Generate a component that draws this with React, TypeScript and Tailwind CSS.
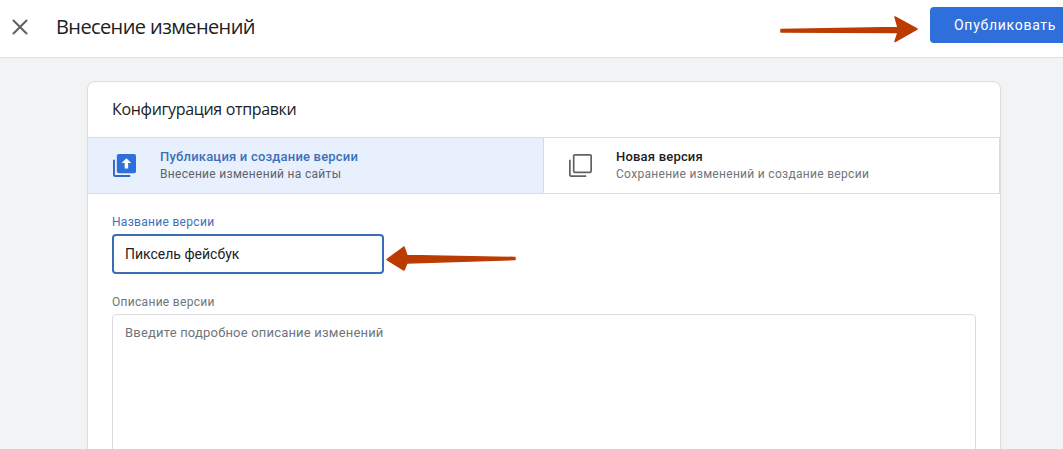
import { X } from "lucide-react";

function PublishIcon() {
  return (
    <svg width="23" height="23" viewBox="0 0 24 24" className="shrink-0 ml-[1px]">
      <path d="M2 6H0v16c0 1.1.9 2 2 2h16v-2H2V6z" fill="#3367c4" />
      <rect x="4" y="0" width="20" height="20" rx="2" fill="#2f6fdb" />
      <path d="M14 4.5l-5 5h3.2V15h3.6V9.500H19l-5-5z" fill="#ffffff" />
    </svg>
  );
}

function VersionIcon() {
  return (
    <svg width="23" height="23" viewBox="0 0 24 24" className="shrink-0 ml-[1px]" fill="#5f6368">
      <path d="M1.800 6H0v16c0 1.100.9 2 2 2h16v-1.800H1.800V6z" />
      <path d="M22 0H6C4.900 0 4 .9 4 2v16c0 1.100.9 2 2 2h16c1.100 0 2-.9 2-2V2c0-1.100-.9-2-2-2zm.2 18.200H5.800V1.800h16.400v16.400z" />
    </svg>
  );
}

export default function App() {
  return (
    <div className="relative w-[1063px] h-[449px] overflow-hidden bg-[#f1f3f4] font-['Roboto',sans-serif]">
      <header className="flex items-center h-[58px] bg-white border-b border-[#e0e0e0] relative">
        <div className="flex items-center pl-[7px] w-[56px] mb-[4px]">
          <X size={26} strokeWidth={1.9} color="#5f6368" />
        </div>
        <h1 className="text-[20px] leading-[24px] mb-[4px] text-[#202124] font-normal font-['Open_Sans',sans-serif] tracking-[-0.6px]">Внесение изменений</h1>
        <button className="absolute left-[930px] top-[7px] w-[140px] h-[36px] rounded-[4px] bg-[#2f6fdb] text-white text-[14px] font-normal tracking-[0.72px] text-left pl-[24px]">
          Опубликовать
        </button>
      </header>

      <main className="pl-[87px] pt-[23px]">
        <section className="w-[914px] h-[420px] bg-white border border-[#dadce0] rounded-[8px]">
          <h2 className="h-[55px] pl-[24px] pb-[2px] flex items-center text-[16px] text-[#202124] font-['Open_Sans',sans-serif] tracking-[-0.33px]">Конфигурация отправки</h2>
          <div className="flex h-[57px] border-y border-[#dadce0]">
            <div className="flex items-center w-[455px] bg-[#e8f0fe] pl-[24px] gap-[24px]">
              <PublishIcon />
              <div className="flex flex-col mb-[1px]">
                <span className="text-[13px] leading-[17px] font-medium tracking-[0.2px] text-[#3d6fb9]">Публикация и создание версии</span>
                <span className="mt-[1px] text-[12px] leading-[16px] tracking-[0.3px] text-[#5f6368]">Внесение изменений на сайты</span>
              </div>
            </div>
            <div className="flex flex-1 items-center pl-[24px] gap-[24px] border-l border-r border-[#dadce0]">
              <VersionIcon />
              <div className="flex flex-col mb-[1px]">
                <span className="text-[13px] leading-[17px] font-medium tracking-[0.2px] text-[#202124]">Новая версия</span>
                <span className="mt-[1px] text-[12px] leading-[16px] tracking-[0.3px] text-[#70757a]">Сохранение изменений и создание версии</span>
              </div>
            </div>
          </div>

          <div className="pl-[24px] pr-[24px] pt-[20px]">
            <label className="block text-[12px] leading-[16px] tracking-[0.3px] text-[#3d6fb9]">Название версии</label>
            <div className="mt-[4px] w-[272px] h-[40px] rounded-[4px] border-2 border-[#3b6db5] flex items-center pl-[11px] text-[14px] text-[#202124]">
              Пиксель фейсбук
            </div>
            <label className="block mt-[20px] text-[12px] leading-[16px] tracking-[0.3px] text-[#70757a]">Описание версии</label>
            <div className="mt-[4px] h-[160px] rounded-[4px] border border-[#dadce0] pl-[12px] pt-[9px] text-[13px] leading-[18px] tracking-[0.19px] text-[#70757a]">
              Введите подробное описание изменений
            </div>
          </div>
        </section>
      </main>

      <svg className="absolute left-0 top-0 pointer-events-none" width="1063" height="449">
        <path d="M781 29.500L898 27.500L895 17L917 29L895 41.500L898 32.500L781 32Z" fill="#bb3c02" stroke="#bb3c02" strokeWidth="1.500" strokeLinejoin="round" />
        <path d="M515 257.500L407 255.500L404 247L387 259.500L404 270L407 263L515 259.500Z" fill="#bb3c02" stroke="#bb3c02" strokeWidth="1.500" strokeLinejoin="round" />
      </svg>
    </div>
  );
}
